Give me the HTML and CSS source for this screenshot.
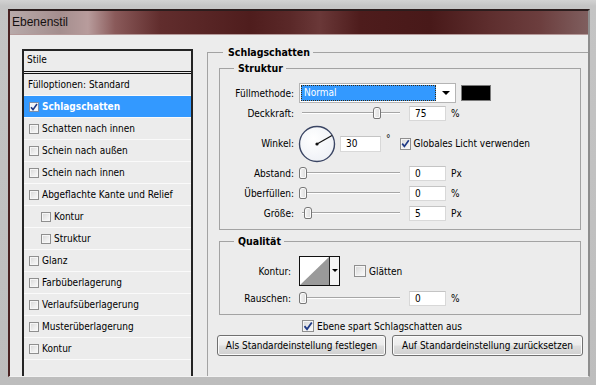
FILE: index.html
```html
<!DOCTYPE html>
<html lang="de">
<head>
<meta charset="utf-8">
<title>Ebenenstil</title>
<link rel="stylesheet" href="styles.css">
</head>
<body>
<div class="window">
  <div class="titlebar"><span class="title">Ebenenstil</span></div>
  <div class="content">
    <div class="styles">
      <div class="styles-head">Stile</div>
      <div class="srow plain">Fülloptionen: Standard</div>
      <div class="srow sel"><span class="cb on"><svg width="8" height="8" viewBox="0 0 8 8"><path d="M1 4.2 L3 6.6 L7 1" fill="none" stroke="#1f3a86" stroke-width="1.6"/></svg></span>Schlagschatten</div>
      <div class="srow"><span class="cb"></span>Schatten nach innen</div>
      <div class="srow"><span class="cb"></span>Schein nach außen</div>
      <div class="srow"><span class="cb"></span>Schein nach innen</div>
      <div class="srow"><span class="cb"></span>Abgeflachte Kante und Relief</div>
      <div class="srow sub"><span class="cb"></span>Kontur</div>
      <div class="srow sub"><span class="cb"></span>Struktur</div>
      <div class="srow"><span class="cb"></span>Glanz</div>
      <div class="srow"><span class="cb"></span>Farbüberlagerung</div>
      <div class="srow"><span class="cb"></span>Verlaufsüberlagerung</div>
      <div class="srow"><span class="cb"></span>Musterüberlagerung</div>
      <div class="srow"><span class="cb"></span>Kontur</div>
    </div>

    <fieldset class="grp main">
      <legend>Schlagschatten</legend>

      <fieldset class="grp inner struktur">
        <legend>Struktur</legend>
        <div class="frow r-fill">
          <label class="lbl">Füllmethode:</label>
          <div class="select"><span class="sel-val">Normal</span><span class="sel-arrow"></span></div>
          <span class="swatch"></span>
        </div>
        <div class="frow r-opac">
          <label class="lbl">Deckkraft:</label>
          <div class="slider"><span class="track"></span><span class="thumb" style="left:74px"></span></div>
          <span class="num">75</span><span class="unit">%</span>
        </div>
        <div class="frow r-angle">
          <label class="lbl">Winkel:</label>
          <svg class="dial" width="38" height="38" viewBox="0 0 38 38">
            <defs><radialGradient id="dg" cx="40%" cy="35%" r="70%"><stop offset="0" stop-color="#ffffff"/><stop offset="1" stop-color="#eef1f6"/></radialGradient></defs>
            <circle cx="19" cy="19" r="17.5" fill="url(#dg)" stroke="#3b4664" stroke-width="1.4"/>
            <line x1="19" y1="19" x2="34" y2="10.5" stroke="#111" stroke-width="1.2"/>
            <circle cx="19" cy="19" r="1.6" fill="#111"/>
          </svg>
          <span class="num wide">30</span><span class="deg">°</span>
          <span class="cb on gl"><svg width="9" height="9" viewBox="0 0 9 9"><path d="M1.2 4.6 L3.4 7.4 L7.8 1.2" fill="none" stroke="#1f3a86" stroke-width="1.7"/></svg></span><span class="cbtext">Globales Licht verwenden</span>
        </div>
        <div class="frow r-dist">
          <label class="lbl">Abstand:</label>
          <div class="slider"><span class="track"></span><span class="thumb" style="left:0px"></span></div>
          <span class="num">0</span><span class="unit">Px</span>
        </div>
        <div class="frow r-spread">
          <label class="lbl">Überfüllen:</label>
          <div class="slider"><span class="track"></span><span class="thumb" style="left:0px"></span></div>
          <span class="num">0</span><span class="unit">%</span>
        </div>
        <div class="frow r-size">
          <label class="lbl">Größe:</label>
          <div class="slider"><span class="track"></span><span class="thumb" style="left:5px"></span></div>
          <span class="num">5</span><span class="unit">Px</span>
        </div>
      </fieldset>

      <fieldset class="grp inner qual">
        <legend>Qualität</legend>
        <div class="frow r-contour">
          <label class="lbl">Kontur:</label>
          <div class="contour">
            <svg class="curve" width="29" height="28" viewBox="0 0 29 28"><rect width="29" height="28" fill="#fff"/><polygon points="0,28 29,0 29,28" fill="#9a9a9a"/></svg>
            <span class="c-arrow"></span>
          </div>
          <span class="cb glatt"></span><span class="cbtext">Glätten</span>
        </div>
        <div class="frow r-noise">
          <label class="lbl">Rauschen:</label>
          <div class="slider"><span class="track"></span><span class="thumb" style="left:0px"></span></div>
          <span class="num">0</span><span class="unit">%</span>
        </div>
      </fieldset>

      <div class="knock">
        <span class="cb on"><svg width="10" height="10" viewBox="0 0 10 10"><path d="M1.5 5.2 L4 8.2 L8.8 1.4" fill="none" stroke="#1f3a86" stroke-width="1.8"/></svg></span><span class="cbtext">Ebene spart Schlagschatten aus</span>
      </div>
      <div class="buttons">
        <button class="btn b1">Als Standardeinstellung festlegen</button>
        <button class="btn b2">Auf Standardeinstellung zurücksetzen</button>
      </div>
    </fieldset>
  </div>
</div>
</body>
</html>
```

FILE: styles.css
```css
* { box-sizing: border-box; }

html, body {
  margin: 0;
  padding: 0;
}

body {
  width: 596px;
  height: 385px;
  overflow: hidden;
  background: linear-gradient(180deg, #d2d2d2 0, #c4c4c4 6px, #bdbdbd 100%);
  font-family: "DejaVu Sans Condensed", "Liberation Sans", sans-serif;
  font-size: 10px;
  color: #000;
  padding-top: 9px;
  padding-left: 8px;
}

.window {
  width: 582px;
  height: 368px;
  border-top: 2px solid #2b1d1d;
  border-left: 2px solid #4a2323;
  border-right: 2px solid #8e8e8e;
  border-bottom: 1px solid #f2f2f2;
  background: #ececec;
  display: flex;
  flex-direction: column;
}

.titlebar {
  height: 24px;
  flex: none;
  border-bottom: 1px solid #b59a9a;
  background: linear-gradient(90deg,
    #b8aaaa 0, #a48e8e 50px, #b89c9c 78px, #8a5a5a 105px,
    #612d2d 150px, #4f1d1d 240px, #5a2828 280px, #6a3838 310px,
    #4e1c1c 350px, #481919 420px, #5e2e2e 480px, #6c3e3e 530px, #806060 580px);
  padding-left: 2px;
}

.title {
  font-family: "Liberation Sans", sans-serif;
  font-size: 12px;
  line-height: 23px;
  color: #141010;
}

.content {
  flex: 1;
  display: flex;
  align-items: flex-start;
  padding-left: 12px;
  overflow: hidden;
}

/* ---------- style list ---------- */
.styles {
  width: 171px;
  height: 330px;
  margin-top: 14px;
  border: 2px solid #242424;
  border-bottom: none;
  flex: none;
}

.styles-head {
  height: 23px;
  line-height: 18px;
  padding-left: 3px;
  border-bottom: 3px double #111;
}

.srow {
  height: 22px;
  display: flex;
  align-items: center;
  padding-left: 5px;
  border-bottom: 1px solid #fafafa;
  white-space: nowrap;
}

.srow.plain { padding-left: 4px; }
.srow.sub { padding-left: 17px; }

.srow.sel {
  background: #3399ff;
  color: #fff;
  font-weight: bold;
}

.cb {
  display: inline-flex;
  align-items: center;
  justify-content: center;
  width: 10px;
  height: 10px;
  margin-right: 3px;
  border: 1px solid #8f8f8f;
  background: linear-gradient(135deg, #d6d6d6 0, #eeeeee 60%, #fafafa 100%);
  box-shadow: inset 0 0 0 1px #f6f6f6;
  flex: none;
}

.srow.sel .cb {
  background: linear-gradient(135deg, #e9eef5, #ffffff);
  border-color: #7d8ea8;
}

/* ---------- group boxes ---------- */
.grp {
  margin: 0;
  min-width: 0;
  border: 1px solid #a3a3a3;
  padding: 0;
}

.grp legend {
  font-weight: bold;
  font-size: 10.5px;
  line-height: 14px;
  padding: 0 3px 0 4px;
  margin-left: 14px;
}

.grp.main {
  flex: 1;
  margin-top: 10px;
  margin-left: 14px;
  border-right: none;
  border-bottom: none;
  padding-left: 11px;
  height: 340px;
}

.grp.main > legend {
  margin-left: 4px;
  padding: 0 3px 0 5px;
}

.grp.inner {
  margin-right: 7px;
  padding-bottom: 8px;
}

.struktur { margin-top: 2px; }
.qual { margin-top: 4px; }

.frow {
  display: flex;
  align-items: center;
  height: 16px;
  margin-top: 4px;
}

.lbl {
  width: 74px;
  text-align: right;
  margin-right: 5px;
  flex: none;
  white-space: nowrap;
}

.r-fill { margin-top: 8px; height: 20px; }
.r-opac { margin-top: 2px; }
.r-angle { height: 37px; margin-top: 4px; }
.r-dist { margin-top: 3px; }
.r-contour { margin-top: 8px; height: 30px; }
.r-contour .lbl, .r-noise .lbl { width: 71px; margin-right: 8px; }

/* select */
.select {
  width: 157px;
  height: 20px;
  display: flex;
  align-items: stretch;
  border: 1px solid #b4b4b4;
  background: #fff;
  padding: 1px;
}

.sel-val {
  flex: 1;
  background: #3399ff;
  color: #fff;
  border: 1px dotted #3a2a10;
  padding-left: 2px;
  line-height: 14px;
}

.sel-arrow {
  width: 18px;
  position: relative;
}

.sel-arrow::after {
  content: "";
  position: absolute;
  left: 6px;
  top: 6px;
  border-left: 4px solid transparent;
  border-right: 4px solid transparent;
  border-top: 4px solid #000;
}

.swatch {
  width: 30px;
  height: 16px;
  margin-left: 5px;
  background: #000;
  border: 1px solid #7a7a7a;
}

/* slider */
.slider {
  position: relative;
  width: 101px;
  height: 16px;
  flex: none;
}

.track {
  position: absolute;
  left: 3px;
  right: 0;
  top: 7px;
  height: 2px;
  border-top: 1px solid #a6a6a6;
  border-bottom: 1px solid #ffffff;
}

.thumb {
  position: absolute;
  top: 2px;
  width: 8px;
  height: 12px;
  border: 1px solid #777;
  border-radius: 3px 3px 2px 2px;
  background: linear-gradient(90deg, #f4f4f4, #dcdcdc);
  box-shadow: inset 0 0 0 1px #fbfbfb;
}

.num {
  width: 37px;
  height: 15px;
  margin-left: 9px;
  background: #fff;
  border: 1px solid #d8d8d8;
  border-top-color: #c4c4c4;
  padding-left: 5px;
  line-height: 13px;
  flex: none;
}

.num.wide {
  width: 41px;
  margin-left: 4px;
  height: 16px;
  line-height: 14px;
}

.unit { margin-left: 5px; }

.dial { margin-left: -1px; flex: none; }

.deg {
  margin-left: 5px;
  align-self: flex-start;
  margin-top: 8px;
  font-size: 10px;
}

.cb.gl { margin-left: 9px; width: 11px; height: 12px; }
.cbtext { white-space: nowrap; }

/* contour */
.contour {
  width: 41px;
  height: 30px;
  display: flex;
  border: 1px solid #111;
  background: #fff;
  flex: none;
}

.curve { display: block; }

.c-arrow {
  flex: 1;
  border-left: 1px solid #222;
  position: relative;
  background: #f4f4f4;
}

.c-arrow::after {
  content: "";
  position: absolute;
  left: 2px;
  top: 12px;
  border-left: 3px solid transparent;
  border-right: 3px solid transparent;
  border-top: 3px solid #000;
}

.cb.glatt { margin-left: 14px; width: 12px; height: 12px; }

/* bottom */
.knock {
  display: flex;
  align-items: center;
  height: 14px;
  margin-top: 4px;
  padding-left: 83px;
}

.knock .cb { width: 12px; height: 12px; }

.buttons {
  display: flex;
  gap: 6px;
  margin-top: 2px;
  margin-left: -2px;
}

.btn {
  height: 21px;
  font-family: inherit;
  font-size: 10px;
  color: #000;
  border: 1px solid #707070;
  border-radius: 3px;
  background: linear-gradient(180deg, #f3f3f3 0, #ececec 48%, #dedede 52%, #d0d0d0 100%);
  box-shadow: inset 0 0 0 1px #fbfbfb;
  padding: 0;
}

.b1 { width: 169px; }
.b2 { width: 191px; }
```
